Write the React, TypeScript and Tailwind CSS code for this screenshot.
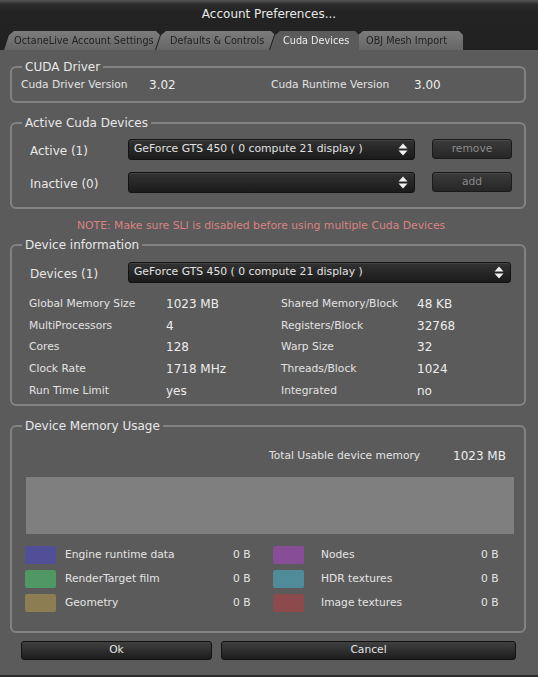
import React from "react";

const font = "font-['DejaVu_Sans',sans-serif]";

function Arrows() {
  return (
    <svg width="10" height="13" viewBox="0 0 10 13" className="shrink-0">
      <path d="M5 0.5 L9.5 5.5 L0.5 5.5 Z" fill="#f2f2f2" />
      <path d="M5 12.5 L9.5 7.5 L0.5 7.5 Z" fill="#f2f2f2" />
    </svg>
  );
}

function Select({ text, w }: { text: string; w: string }) {
  return (
    <div
      className={`${w} h-[21px] flex items-center justify-between pl-[5px] pr-[6px] rounded-[3px] border border-[#121212] bg-gradient-to-b from-[#333333] to-[#1b1b1b] shadow-[inset_0_1px_0_rgba(255,255,255,0.08)] text-[10.8px] text-[#e2e2e2] leading-none`}
    >
      <span>{text}</span>
      <Arrows />
    </div>
  );
}

function SmallBtn({ label }: { label: string }) {
  return (
    <div className="w-[80px] h-[20px] ml-[17px] flex items-center justify-center rounded-[3px] border border-[#1a1a1a] bg-gradient-to-b from-[#3c3c3c] to-[#262626] text-[10.7px] text-[#8a8a8a] shadow-[inset_0_1px_0_rgba(255,255,255,0.07)]">
      {label}
    </div>
  );
}

function Group({
  title,
  className,
  children,
}: {
  title: string;
  className?: string;
  children: React.ReactNode;
}) {
  return (
    <fieldset
      className={`border-2 border-[#828282] rounded-[6px] p-0 m-0 min-w-0 ${className ?? ""}`}
    >
      <legend className="ml-[10px] px-[3px] text-[12px] leading-[16px] text-[#e8e8e8]">
        {title}
      </legend>
      {children}
    </fieldset>
  );
}

function InfoRow({
  a,
  av,
  b,
  bv,
}: {
  a: string;
  av: string;
  b: string;
  bv: string;
}) {
  return (
    <div className="h-[21.75px] flex items-center">
      <div className="w-[137px] text-[10.7px] text-[#e2e2e2]">{a}</div>
      <div className="w-[115px] text-[12px] text-[#ededed]">{av}</div>
      <div className="w-[136px] text-[10.7px] text-[#e2e2e2]">{b}</div>
      <div className="text-[12px] text-[#ededed]">{bv}</div>
    </div>
  );
}

function Legend({
  color,
  label,
  gap,
  lw,
}: {
  color: string;
  label: string;
  gap: string;
  lw: string;
}) {
  return (
    <div className="h-[18px] flex items-center">
      <div className={`w-[31px] h-[18px] rounded-[2px] ${color}`} />
      <div className={`${gap} ${lw} text-[10.7px] text-[#e4e4e4]`}>{label}</div>
      <div className="text-[10.7px] text-[#e4e4e4]">0 B</div>
    </div>
  );
}

const tabClip =
  "[clip-path:polygon(0_100%,5px_4px,10px_0,calc(100%_-_4px)_0,100%_4px,100%_100%)]";
const inactiveTab =
  "bg-gradient-to-b from-[#7c7c7c] to-[#666666] text-[#222222]";

export default function App() {
  return (
    <div
      className={`${font} w-[538px] h-[677px] bg-[#5b5b5b] flex flex-col overflow-hidden`}
    >
      {/* header */}
      <div className="h-[50px] bg-[linear-gradient(#585858_0px,#2c2c2c_4px,#232323_12px,#222222_100%)] flex flex-col">
        <div className="h-[31px] pt-[6px] text-center text-[12px] leading-[16px] text-[#e8e8e8]">
          Account Preferences...
        </div>
        <div className="h-[19px] flex items-end">
          <div className="ml-[4px] w-[156px] h-[19px] [filter:drop-shadow(-1px_0_0_#1c1c1c)]">
            <div className={`w-full h-full flex items-center pl-[10px] text-[9.7px] leading-none ${tabClip} ${inactiveTab}`}>
              OctaneLive Account Settings
            </div>
          </div>
          <div className="-ml-[4px] w-[119px] h-[19px] [filter:drop-shadow(-1px_0_0_#1c1c1c)]">
            <div className={`w-full h-full flex items-center pl-[14px] text-[9.7px] leading-none ${tabClip} ${inactiveTab}`}>
              Defaults &amp; Controls
            </div>
          </div>
          <div className="-ml-[5px] w-[89px] h-[19px] relative z-10 [filter:drop-shadow(-1px_0_0_#1c1c1c)]">
            <div className={`w-full h-full flex items-center pl-[13px] text-[9.7px] leading-none ${tabClip} bg-[#5b5b5b] text-[#ececec]`}>
              Cuda Devices
            </div>
          </div>
          <div className="-ml-[6px] w-[110px] h-[19px] [filter:drop-shadow(-1px_0_0_#1c1c1c)]">
            <div className={`w-full h-full flex items-center pl-[13px] text-[9.7px] leading-none ${tabClip} ${inactiveTab}`}>
              OBJ Mesh Import
            </div>
          </div>
        </div>
      </div>

      {/* body */}
      <div className="pl-[10px] pr-[12px] flex flex-col">
        <Group title="CUDA Driver" className="mt-[9px]">
          <div className="pt-[3px] pb-[9px] pl-[9px] h-[26px] flex items-center">
            <div className="w-[128px] text-[10.7px] text-[#e2e2e2]">
              Cuda Driver Version
            </div>
            <div className="w-[122px] text-[12px] text-[#ededed]">3.02</div>
            <div className="w-[143px] text-[10.7px] text-[#e2e2e2]">
              Cuda Runtime Version
            </div>
            <div className="text-[12px] text-[#ededed]">3.00</div>
          </div>
        </Group>

        <Group title="Active Cuda Devices" className="mt-[12px]">
          <div className="pt-[7px] pb-[14px] pl-[18px] flex flex-col gap-[11px]">
            <div className="flex items-center">
              <div className="w-[98px] pt-[4px] text-[12px] text-[#e8e8e8]">
                Active (1)
              </div>
              <Select
                text="GeForce GTS 450 ( 0 compute 21 display )"
                w="w-[287px]"
              />
              <SmallBtn label="remove" />
            </div>
            <div className="flex items-center">
              <div className="w-[98px] pt-[4px] text-[12px] text-[#e8e8e8]">
                Inactive (0)
              </div>
              <Select text="" w="w-[287px]" />
              <SmallBtn label="add" />
            </div>
          </div>
        </Group>

        <div className="mt-[10px] mb-[4px] h-[14px] pl-[67px] text-[10.8px] leading-[14px] text-[#d98383]">
          NOTE: Make sure SLI is disabled before using multiple Cuda Devices
        </div>

        <Group title="Device information">
          <div className="pt-[8px] pb-[2px] pl-[18px]">
            <div className="flex items-center">
              <div className="w-[98px] pt-[4px] text-[12px] text-[#e8e8e8]">
                Devices (1)
              </div>
              <Select
                text="GeForce GTS 450 ( 0 compute 21 display )"
                w="w-[383px]"
              />
            </div>
            <div className="mt-[10px] -ml-[1px]">
              <InfoRow a="Global Memory Size" av="1023 MB" b="Shared Memory/Block" bv="48 KB" />
              <InfoRow a="MultiProcessors" av="4" b="Registers/Block" bv="32768" />
              <InfoRow a="Cores" av="128" b="Warp Size" bv="32" />
              <InfoRow a="Clock Rate" av="1718 MHz" b="Threads/Block" bv="1024" />
              <InfoRow a="Run Time Limit" av="yes" b="Integrated" bv="no" />
            </div>
          </div>
        </Group>

        <Group title="Device Memory Usage" className="mt-[12px]">
          <div className="pt-[15px] pb-[19px]">
            <div className="h-[14px] flex items-center pl-[257px]">
              <div className="w-[184px] text-[10.7px] text-[#e2e2e2]">
                Total Usable device memory
              </div>
              <div className="text-[12px] text-[#ededed]">1023 MB</div>
            </div>
            <div className="mt-[14px] ml-[14px] mr-[10px] h-[57px] bg-[#7f7f7f]" />
            <div className="mt-[12px] flex">
              <div className="w-[261px] pl-[13px] flex flex-col gap-[6px]">
                <Legend color="bg-[#514f97]" label="Engine runtime data" gap="ml-[9px]" lw="w-[168px]" />
                <Legend color="bg-[#4f9863]" label="RenderTarget film" gap="ml-[9px]" lw="w-[168px]" />
                <Legend color="bg-[#8c7d52]" label="Geometry" gap="ml-[9px]" lw="w-[168px]" />
              </div>
              <div className="flex flex-col gap-[6px]">
                <Legend color="bg-[#874d97]" label="Nodes" gap="ml-[17px]" lw="w-[160px]" />
                <Legend color="bg-[#4f8b98]" label="HDR textures" gap="ml-[17px]" lw="w-[160px]" />
                <Legend color="bg-[#8c4a4d]" label="Image textures" gap="ml-[17px]" lw="w-[160px]" />
              </div>
            </div>
          </div>
        </Group>

        <div className="mt-[8px] pl-[11px] flex gap-[9px]">
          <div className="w-[191px] h-[19px] flex items-center justify-center rounded-[3px] border border-[#121212] bg-gradient-to-b from-[#404040] to-[#1d1d1d] text-[10.7px] text-[#e4e4e4]">
            Ok
          </div>
          <div className="w-[295px] h-[19px] flex items-center justify-center rounded-[3px] border border-[#121212] bg-gradient-to-b from-[#404040] to-[#1d1d1d] text-[10.7px] text-[#e4e4e4]">
            Cancel
          </div>
        </div>
      </div>
      <div className="mt-auto h-[2px] bg-[#2c2c2c]" />
    </div>
  );
}
